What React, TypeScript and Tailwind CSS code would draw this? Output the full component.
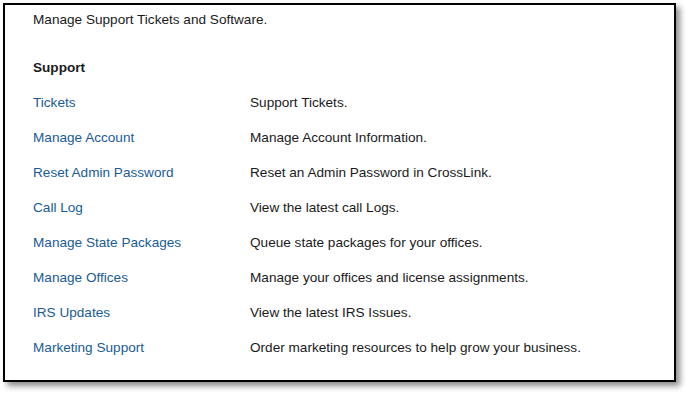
const rows: [string, string][] = [
  ["Tickets", "Support Tickets."],
  ["Manage Account", "Manage Account Information."],
  ["Reset Admin Password", "Reset an Admin Password in CrossLink."],
  ["Call Log", "View the latest call Logs."],
  ["Manage State Packages", "Queue state packages for your offices."],
  ["Manage Offices", "Manage your offices and license assignments."],
  ["IRS Updates", "View the latest IRS Issues."],
  ["Marketing Support", "Order marketing resources to help grow your business."],
];

export default function App() {
  return (
    <div className="w-[687px] h-[394px] bg-white pl-[3px] pt-[3px] font-['Liberation_Sans',Arial,sans-serif] text-[13.6px] text-[#1a1a1a]">
      <div className="w-[673px] h-[379px] border-2 border-black bg-white shadow-[4px_4px_6px_rgba(0,0,0,0.45)] pl-[28px]">
        <div className="pt-[7px] leading-[15px]">Manage Support Tickets and Software.</div>
        <div className="mt-[24px] h-[35px] flex items-center font-bold">Support</div>
        {rows.map(([link, desc]) => (
          <div key={link} className="h-[35px] flex items-center">
            <a href="#" className="w-[217px] text-[#1b5b94]">{link}</a>
            <span>{desc}</span>
          </div>
        ))}
      </div>
    </div>
  );
}
